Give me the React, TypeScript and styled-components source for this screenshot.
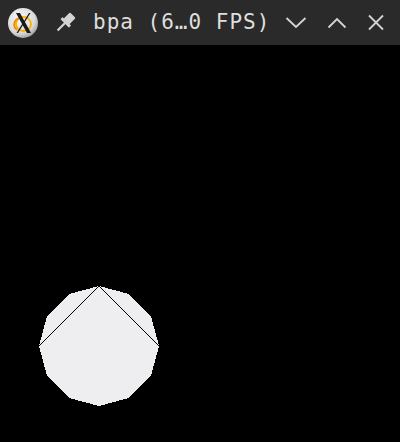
import React from "react";
import styled, { createGlobalStyle } from "styled-components";

const Global = createGlobalStyle`
  html, body { margin: 0; padding: 0; background: #000; }
  #root { width: 400px; height: 442px; }
`;

const Window = styled.div`
  width: 400px;
  height: 442px;
  display: flex;
  flex-direction: column;
  background: #000;
  overflow: hidden;
`;

const TitleBar = styled.div`
  height: 45px;
  flex: 0 0 45px;
  background: #2a2a2a;
  display: flex;
  align-items: center;
  padding-left: 8px;
  box-sizing: border-box;
`;

const Logo = styled.svg`
  width: 30px;
  height: 30px;
  flex: 0 0 30px;
  margin-right: 15px;
`;

const PinIcon = styled.svg`
  width: 24px;
  height: 24px;
  flex: 0 0 24px;
  margin-right: 16px;
`;

const Title = styled.div`
  font-family: "DejaVu Sans Mono", "Liberation Mono", monospace;
  font-size: 21px;
  letter-spacing: 1px;
  color: #dedede;
  white-space: nowrap;
  flex: 1 1 auto;
  line-height: 1;
  padding-bottom: 1px;
`;

const Controls = styled.div`
  display: flex;
  align-items: center;
  margin-right: 12px;
`;

const CtrlIcon = styled.svg<{ $gap: number }>`
  width: 24px;
  height: 24px;
  margin-left: ${(p) => p.$gap}px;
`;

const Canvas = styled.svg`
  display: block;
  flex: 1 1 auto;
  width: 400px;
`;

const cx = 99;
const cy = 301;
const r = 60;
const pts = Array.from({ length: 12 }, (_, k) => {
  const a = (k * Math.PI) / 6;
  return `${(cx + r * Math.sin(a)).toFixed(2)},${(cy - r * Math.cos(a)).toFixed(2)}`;
}).join(" ");

export default function App() {
  return (
    <>
      <Global />
      <Window>
        <TitleBar>
          <Logo viewBox="0 0 30 30">
            <defs>
              <radialGradient id="lg" cx="40%" cy="35%" r="70%">
                <stop offset="0%" stopColor="#fafafa" />
                <stop offset="70%" stopColor="#d9d9d9" />
                <stop offset="100%" stopColor="#9a9a9a" />
              </radialGradient>
            </defs>
            <circle cx="15" cy="15" r="15" fill="url(#lg)" />
            <ellipse cx="15.5" cy="16" rx="7.5" ry="7" fill="none" stroke="#f5b400" strokeWidth="1.8" />
            <path d="M9 22 A7.5 7 0 0 1 11 10" fill="none" stroke="#f08a00" strokeWidth="1.8" />
            <path d="M8 5 L12 5 L23 25 L19 25 Z" fill="#1a1a1a" />
            <path d="M21 5 L22.5 5 L10 25 L8.5 25 Z" fill="#1a1a1a" />
          </Logo>
          <PinIcon viewBox="0 0 24 24">
            <g transform="rotate(45 12 12)" fill="#d4d4d4">
              <rect x="8" y="1" width="8" height="9" rx="1" />
              <rect x="6" y="9.5" width="12" height="3" rx="0.6" />
              <rect x="10.9" y="12" width="2.2" height="10.5" />
            </g>
          </PinIcon>
          <Title>bpa (6…0 FPS)</Title>
          <Controls>
            <CtrlIcon $gap={0} viewBox="0 0 24 24">
              <polyline points="2.5,7 12,16 21.5,7" fill="none" stroke="#d4d4d4" strokeWidth="1.8" />
            </CtrlIcon>
            <CtrlIcon $gap={17} viewBox="0 0 24 24">
              <polyline points="3.5,16.5 12,8 20.5,16.5" fill="none" stroke="#d4d4d4" strokeWidth="1.8" />
            </CtrlIcon>
            <CtrlIcon $gap={15} viewBox="0 0 24 24">
              <path d="M5 4.5 L19 18.5 M19 4.5 L5 18.5" fill="none" stroke="#d4d4d4" strokeWidth="1.8" />
            </CtrlIcon>
          </Controls>
        </TitleBar>
        <Canvas viewBox="0 0 400 397" height="397">
          <polygon points={pts} fill="#eeeef0" shapeRendering="crispEdges" />
          <polyline points="39,301 99,241 159,301" fill="none" stroke="#000" strokeWidth="1" />
        </Canvas>
      </Window>
    </>
  );
}
